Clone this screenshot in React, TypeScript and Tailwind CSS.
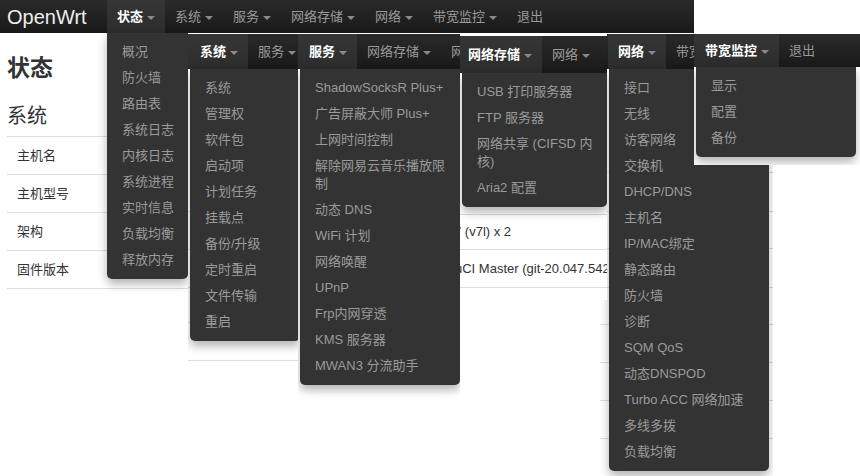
import React from "react";

const font = "font-['Liberation_Sans','Noto_Sans_CJK_SC',sans-serif]";

function Caret() {
    return <span className="ml-[4px] mt-[2px] inline-block h-0 w-0 border-x-[4px] border-t-[4px] border-x-transparent border-t-[#8a8a8a]" />;
}

function NavItem({ label, active = false, caret = true, pad = "px-[10px]" }: { label: string; active?: boolean; caret?: boolean; pad?: string }) {
    return (
        <div
            className={`flex h-full shrink-0 items-center whitespace-nowrap text-[13px] ${pad} ${
                active ? "bg-gradient-to-b from-[#363636] to-[#2c2c2c] font-bold text-white" : "text-[#999]"
            }`}
        >
            <span>{label}</span>
            {caret && <Caret />}
        </div>
    );
}

function Menu({ items, className }: { items: React.ReactNode[]; className: string }) {
    return (
        <ul className={`absolute rounded-b-[5px] bg-[#333] py-[6px] shadow-[0_5px_10px_rgba(0,0,0,0.3)] ${className}`}>
            {items.map((item, i) => (
                <li key={i} className="whitespace-nowrap px-[15px] py-[4px] text-[13px] leading-[18px] text-[#9a9a9a]">
                    {item}
                </li>
            ))}
        </ul>
    );
}

const navBg = "bg-gradient-to-b from-[#2a2a2a] to-[#191919]";

export default function App() {
    return (
        <div className={`relative h-[476px] w-[860px] overflow-hidden bg-white ${font}`}>
            {/* shot 1: 状态 */}
            <div className="absolute left-0 top-0 h-[476px] w-[694px] overflow-hidden bg-white">
                <div className={`flex h-[33px] items-center ${navBg}`}>
                    <div className="w-[107px] shrink-0 pl-[7px] text-[20px] text-[#eee]">OpenWrt</div>
                    <NavItem label="状态" active />
                    <NavItem label="系统" />
                    <NavItem label="服务" />
                    <NavItem label="网络存储" />
                    <NavItem label="网络" />
                    <NavItem label="带宽监控" />
                    <NavItem label="退出" caret={false} />
                </div>
                <div className="pl-[7px] text-[#333]">
                    <h2 className="mt-[21px] text-[23px] font-bold leading-[28px]">状态</h2>
                    <h3 className="mt-[22px] text-[20px] leading-[24px]">系统</h3>
                    <div className="mt-[8px] w-[680px] border-t border-[#ddd]">
                        {["主机名", "主机型号", "架构", "固件版本"].map((t) => (
                            <div key={t} className="flex h-[38px] items-center border-b border-[#ddd] pl-[10px] text-[13px]">
                                {t}
                            </div>
                        ))}
                    </div>
                </div>
                <Menu
                    className="left-[107px] top-[33px] w-[81px]"
                    items={["概况", "防火墙", "路由表", "系统日志", "内核日志", "系统进程", "实时信息", "负载均衡", "释放内存"]}
                />
            </div>

            {/* shot 2: 系统 */}
            <div className="absolute left-[188px] top-[34px] h-[442px] w-[110px] overflow-hidden bg-white">
                <div className={`flex h-[35px] items-center ${navBg}`}>
                    <NavItem label="系统" active pad="pl-[12px] pr-[10px]" />
                    <NavItem label="服务" />
                </div>
                <div className="h-[143px] border-b border-[#ddd]" />
                <div className="h-[38px] border-b border-[#ddd]" />
                <div className="h-[38px] border-b border-[#ddd]" />
                <div className="h-[35px] border-b border-[#ddd]" />
                <div className="h-[38px] border-b border-[#ddd]" />
                <Menu
                    className="left-[2px] top-[35px] w-[110px]"
                    items={["系统", "管理权", "软件包", "启动项", "计划任务", "挂载点", "备份/升级", "定时重启", "文件传输", "重启"]}
                />
            </div>

            {/* shot 3: 服务 */}
            <div className="absolute left-[298px] top-[34px] h-[442px] w-[162px] overflow-hidden bg-white">
                <div className={`flex h-[35px] items-center ${navBg}`}>
                    <NavItem label="服务" active pad="pl-[11px] pr-[10px]" />
                    <NavItem label="网络存储" />
                    <NavItem label="网络" />
                </div>
                <Menu
                    className="left-[2px] top-[35px] w-[160px]"
                    items={[
                        "ShadowSocksR Plus+",
                        "广告屏蔽大师 Plus+",
                        "上网时间控制",
                        <>
                            解除网易云音乐播放限
                            <br />制
                        </>,
                        "动态 DNS",
                        "WiFi 计划",
                        "网络唤醒",
                        "UPnP",
                        "Frp内网穿透",
                        "KMS 服务器",
                        "MWAN3 分流助手",
                    ]}
                />
            </div>

            {/* shot 5: 网络 */}
            <div className="absolute left-[600px] top-[34px] h-[442px] w-[173px] overflow-hidden bg-white">
                <div className={`flex h-[35px] items-center pl-[8px] ${navBg}`}>
                    <NavItem label="网络" active />
                    <NavItem label="带宽监控" />
                </div>
                <div className="h-[104px] border-b border-[#ddd]" />
                <div className="h-[39px] border-b border-[#ddd]" />
                <div className="h-[37px] border-b border-[#ddd]" />
                <div className="h-[39px] border-b border-[#ddd]" />
                <div className="h-[37px] border-b border-[#ddd]" />
                <div className="h-[38px] border-b border-[#ddd]" />
                <div className="h-[38px] border-b border-[#ddd]" />
                <div className="h-[38px] border-b border-[#ddd]" />
                <Menu
                    className="left-[9px] top-[35px] w-[160px]"
                    items={[
                        "接口",
                        "无线",
                        "访客网络",
                        "交换机",
                        "DHCP/DNS",
                        "主机名",
                        "IP/MAC绑定",
                        "静态路由",
                        "防火墙",
                        "诊断",
                        "SQM QoS",
                        "动态DNSPOD",
                        "Turbo ACC 网络加速",
                        "多线多拨",
                        "负载均衡",
                    ]}
                />
            </div>

            {/* shot 4: 网络存储 */}
            <div className="absolute left-[460px] top-[34px] h-[266px] w-[147px] overflow-hidden bg-white">
                <div className={`mt-[2px] flex h-[37px] items-center ${navBg}`}>
                    <NavItem label="网络存储" active pad="pl-[8px] pr-[10px]" />
                    <NavItem label="网络" />
                </div>
                <div className="h-[142px] border-b border-[#ddd]" />
                <div className="flex h-[35px] items-center whitespace-nowrap border-b border-[#ddd] text-[13px] text-[#333]">
                    <span className="-ml-[6px]">7 (v7l) x 2</span>
                </div>
                <div className="flex h-[38px] items-center whitespace-nowrap border-b border-[#ddd] text-[13px] text-[#333]">
                    <span className="-ml-[5px]">uCI Master (git-20.047.54278-1a2b3c)</span>
                </div>
                <Menu
                    className="left-[2px] top-[39px] w-[145px]"
                    items={[
                        "USB 打印服务器",
                        "FTP 服务器",
                        <>
                            网络共享 (CIFSD 内
                            <br />核)
                        </>,
                        "Aria2 配置",
                    ]}
                />
            </div>

            {/* shot 6: 带宽监控 */}
            <div className="absolute left-[694px] top-[34px] h-[131px] w-[166px] overflow-hidden bg-white">
                <div className={`flex h-[33px] items-center ${navBg}`}>
                    <NavItem label="带宽监控" active pad="pl-[11px] pr-[10px]" />
                    <NavItem label="退出" caret={false} />
                </div>
                <Menu className="left-[2px] top-[33px] w-[160px]" items={["显示", "配置", "备份"]} />
            </div>
        </div>
    );
}
